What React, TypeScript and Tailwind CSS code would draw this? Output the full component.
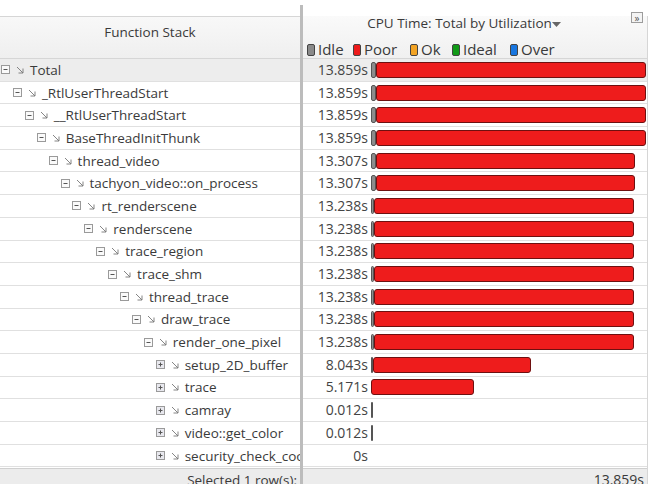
import React from "react";

type Row = { name: string; level: number; sec: number; idle: number; open: boolean };

const rows: Row[] = [
  { name: "Total", level: 0, sec: 13.859, idle: 5, open: true },
  { name: "_RtlUserThreadStart", level: 1, sec: 13.859, idle: 5, open: true },
  { name: "__RtlUserThreadStart", level: 2, sec: 13.859, idle: 5, open: true },
  { name: "BaseThreadInitThunk", level: 3, sec: 13.859, idle: 5, open: true },
  { name: "thread_video", level: 4, sec: 13.307, idle: 5, open: true },
  { name: "tachyon_video::on_process", level: 5, sec: 13.307, idle: 5, open: true },
  { name: "rt_renderscene", level: 6, sec: 13.238, idle: 3, open: true },
  { name: "renderscene", level: 7, sec: 13.238, idle: 3, open: true },
  { name: "trace_region", level: 8, sec: 13.238, idle: 3, open: true },
  { name: "trace_shm", level: 9, sec: 13.238, idle: 3, open: true },
  { name: "thread_trace", level: 10, sec: 13.238, idle: 3, open: true },
  { name: "draw_trace", level: 11, sec: 13.238, idle: 3, open: true },
  { name: "render_one_pixel", level: 12, sec: 13.238, idle: 3, open: true },
  { name: "setup_2D_buffer", level: 13, sec: 8.043, idle: 2, open: false },
  { name: "trace", level: 13, sec: 5.171, idle: 0, open: false },
  { name: "camray", level: 13, sec: 0.012, idle: 2, open: false },
  { name: "video::get_color", level: 13, sec: 0.012, idle: 2, open: false },
  { name: "security_check_cookie", level: 13, sec: 0, idle: 0, open: false },
];

const TOTAL = 13.859;
const FULL = 275;

function fmt(s: number) {
  return s === 0 ? "0s" : s.toFixed(3) + "s";
}

function TreeBox({ open }: { open: boolean }) {
  return (
    <svg width="9" height="9" viewBox="0 0 9 9" className="flex-shrink-0">
      <rect x="0.5" y="0.5" width="8" height="8" fill={open ? "#fafafa" : "#e8e8ee"} stroke="#9a9a9a" />
      <path d="M2.5 4.5H6.5" stroke="#555" />
      {!open && <path d="M4.5 2.5V6.5" stroke="#555" />}
    </svg>
  );
}

function CallArrow() {
  return (
    <svg width="8" height="8" viewBox="0 0 8 8" className="flex-shrink-0">
      <path d="M1 1L7 7M2.5 7H7V2.5" stroke="#777" strokeWidth="0.9" fill="none" />
    </svg>
  );
}

function Swatch({ color }: { color: string }) {
  return <span className={`inline-block flex-shrink-0 w-[8px] h-[12px] rounded-[2px] border border-[#444] ${color}`} />;
}

export default function App() {
  return (
    <div
      className="w-[657px] h-[484px] overflow-hidden bg-white text-[#3a3a3a] flex"
      style={{ fontFamily: '"Open Sans", "Noto Sans", sans-serif' }}
    >
      {/* left: function stack */}
      <div className="w-[300px] flex-shrink-0 flex flex-col">
        <div className="h-[16px] flex-shrink-0" />
        <div className="h-[43px] flex-shrink-0 border-t border-b border-[#d6d6d6] bg-gradient-to-b from-[#f8f8f8] to-[#efefef] text-center text-[13.5px] pt-[5px] leading-[20px]">
          Function Stack
        </div>
        {rows.map((r, i) => (
          <div
            key={i}
            className={`h-[22.7px] flex-shrink-0 border-b border-[#e0e0e0] flex items-center overflow-hidden whitespace-nowrap text-[13.5px] ${i === 0 ? "bg-[#ededed]" : "bg-white"}`}
            style={{ paddingLeft: 1 + r.level * 11.9 }}
          >
            <TreeBox open={r.open} />
            <span className="ml-[6px]"><CallArrow /></span>
            <span className="ml-[6px] leading-[20px]">{r.name}</span>
          </div>
        ))}
        <div className="flex-shrink-0 border-t border-[#d0d0d0] mt-[1px] bg-[#ececec] h-[24px] text-right pr-[3px] text-[13.5px] leading-[22px]">
          Selected 1 row(s):
        </div>
      </div>

      {/* divider */}
      <div className="w-[3px] flex-shrink-0 mt-[5px] bg-[#bcbcbc]" />

      {/* right: cpu time */}
      <div className="w-[345px] flex-shrink-0 flex flex-col border-r border-[#d6d6d6] mt-[16px]">
        <div className="relative h-[43px] flex-shrink-0 border-b border-[#d6d6d6] bg-gradient-to-b from-[#fafafa] to-[#f0f0f0] flex flex-col">
          <div className="h-[14px] flex justify-center items-center pr-[22px] text-[13.5px]">
            <span>CPU Time: Total by Utilization</span>
            <svg width="9" height="6" viewBox="0 0 9 6" className="mt-[4px]">
              <path d="M0 0H9L4.5 5Z" fill="#666" />
            </svg>
          </div>
          <div className="absolute right-[4px] top-[-4px] w-[12px] h-[11px] border border-[#9c9c9c] bg-[#f4f4f4] flex items-center justify-center text-[10px] leading-none text-[#555]">
            »
          </div>
          <div className="mt-[11px] h-[17px] flex items-center pl-[4px] text-[15px] leading-none whitespace-nowrap">
            <Swatch color="bg-[#8a8a8a]" />
            <span className="ml-[3px] w-[35px]">Idle</span>
            <Swatch color="bg-[#ee1b1b]" />
            <span className="ml-[3px] w-[46px]">Poor</span>
            <Swatch color="bg-[#f3a424]" />
            <span className="ml-[3px] w-[31px]">Ok</span>
            <Swatch color="bg-[#119a17]" />
            <span className="ml-[3px] w-[47px]">Ideal</span>
            <Swatch color="bg-[#1876e0]" />
            <span className="ml-[3px]">Over</span>
          </div>
        </div>
        {rows.map((r, i) => {
          const bar = Math.round((r.sec / TOTAL) * FULL);
          const poor = Math.max(0, bar - r.idle);
          return (
            <div
              key={i}
              className={`h-[22.7px] flex-shrink-0 border-b border-[#e0e0e0] flex items-center ${i === 0 ? "bg-[#ededed]" : "bg-white"}`}
            >
              <div className="w-[66px] text-right text-[14px] leading-[20px] text-[#444] pr-[1px]">{fmt(r.sec)}</div>
              <div className="ml-[2px] flex items-center h-[16px]">
                {r.idle > 0 && (
                  <div
                    className={`h-[16px] rounded-[2px] ${r.idle > 2 ? "bg-[#8c8c8c] border border-[#555]" : "bg-[#555]"}`}
                    style={{ width: r.idle }}
                  />
                )}
                {poor > 0 && (
                  <div
                    className="h-[16px] bg-[#ee1c1c] border border-[#6e1010] rounded-[3px]"
                    style={{ width: poor }}
                  />
                )}
              </div>
            </div>
          );
        })}
        <div className="flex-shrink-0 border-t border-[#d0d0d0] mt-[1px] bg-[#ececec] h-[24px] text-right pr-[3px] text-[14px] leading-[22px]">
          13.859s
        </div>
      </div>
    </div>
  );
}
